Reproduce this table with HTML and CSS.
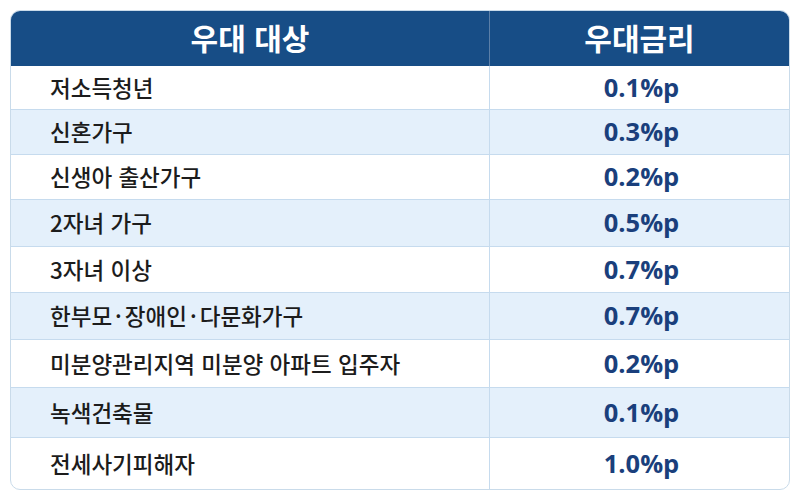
FILE: index.html
```html
<!DOCTYPE html>
<html lang="ko">
<head>
<meta charset="utf-8">
<link rel="stylesheet" href="styles.css">
</head>
<body>
<div class="table">
  <div class="row head">
    <div class="c1">우대 대상</div>
    <div class="c2">우대금리</div>
  </div>
  <div class="row"><div class="c1">저소득청년</div><div class="c2">0.1%p</div></div>
  <div class="row alt"><div class="c1">신혼가구</div><div class="c2">0.3%p</div></div>
  <div class="row"><div class="c1">신생아 출산가구</div><div class="c2">0.2%p</div></div>
  <div class="row alt"><div class="c1">2자녀 가구</div><div class="c2">0.5%p</div></div>
  <div class="row"><div class="c1">3자녀 이상</div><div class="c2">0.7%p</div></div>
  <div class="row alt"><div class="c1">한부모<span class="dot">·</span>장애인<span class="dot">·</span>다문화가구</div><div class="c2">0.7%p</div></div>
  <div class="row"><div class="c1">미분양관리지역 미분양 아파트 입주자</div><div class="c2">0.2%p</div></div>
  <div class="row alt"><div class="c1">녹색건축물</div><div class="c2">0.1%p</div></div>
  <div class="row last"><div class="c1">전세사기피해자</div><div class="c2">1.0%p</div></div>
</div>
</body>
</html>
```
FILE: styles.css
```css
html, body { margin: 0; padding: 0; background: #ffffff; }
body { padding: 10px; font-family: "Noto Sans CJK KR", "Noto Sans", sans-serif; }
.table {
  width: 780px;
  border: 1px solid #c9dbea;
  border-radius: 10px;
  overflow: hidden;
  box-sizing: border-box;
  display: grid;
  grid-template-rows: 55px 44px 45px 45px 47px 46px 47px 48px 50px 51px;
}
.row {
  display: grid;
  grid-template-columns: 479px 1fr;
  border-bottom: 1px solid #c6dbee;
  box-sizing: border-box;
}
.row.last { border-bottom: none; }
.row.alt { background: #e4f0fb; }
.row .c1 {
  border-right: 1px solid #c6dbee;
  display: flex;
  align-items: center;
  padding-left: 39px;
  padding-bottom: 2px;
  font-size: 22.5px;
  font-weight: 500;
  color: #1c1c1c;
}
.dot { margin: 0 3px; }
.row .c2 {
  display: flex;
  align-items: center;
  justify-content: center;
  font-family: "Open Sans", "Noto Sans", sans-serif;
  font-size: 25.5px;
  font-weight: 700;
  color: #1a3f7c;
  padding-left: 4px;
  padding-bottom: 2px;
}
.row.head {
  background: #174d86;
  border-bottom: none;
}
.row.head .c1, .row.head .c2 {
  justify-content: center;
  padding-left: 0;
  padding-bottom: 3px;
  color: #ffffff;
  font-family: "Noto Sans CJK KR", sans-serif;
  font-size: 30px;
  font-weight: 700;
}
.row.head .c1 { border-right: 1px solid #5b7fa8; }
```
